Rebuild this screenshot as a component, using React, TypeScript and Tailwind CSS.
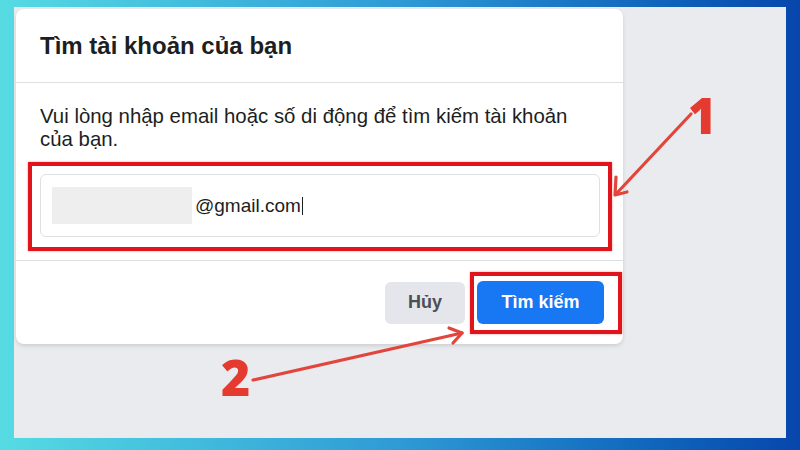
import React from "react";

export default function App() {
  return (
    <div
      className="relative w-[800px] h-[450px] overflow-hidden bg-linear-to-r from-[#56dbe3] via-[#2f9ad5] to-[#0846ac] pt-[7px] pl-[14px] pr-[14px] pb-[12px]"
      style={{ fontFamily: '"Liberation Sans", Arial, sans-serif' }}
    >
      <div className="w-full h-full bg-[#e9ebee] pl-[2px] pt-[2px] border-b border-[#d6f1f6]">
        <div className="w-[607px] h-[335px] bg-white rounded-lg shadow-[0_2px_4px_rgba(0,0,0,0.12)] flex flex-col">
          <div className="h-[74px] shrink-0 flex items-center px-6 border-b border-[#dddfe2]">
            <h2 className="text-[24px] leading-[28px] font-bold text-[#1c1e21]">
              Tìm tài khoản của bạn
            </h2>
          </div>
          <div className="px-6 pt-[22px] pb-[23px] border-b border-[#dddfe2]">
            <p className="text-[20.4px] leading-[23px] text-[#1c1e21]">
              Vui lòng nhập email hoặc số di động để tìm kiếm tài khoản của bạn.
            </p>
            <div className="mt-[23px] h-[63px] w-[560px] rounded-md border border-[#dddfe2] bg-white flex items-center pl-[11px]">
              <div className="w-[140px] h-[37px] bg-[#eeeeee]" />
              <span className="ml-[3px] text-[19px] leading-[22px] text-[#1c1e21]">
                @gmail.com
              </span>
              <span className="ml-[1px] w-px h-[18px] bg-[#1c1e21]" />
            </div>
          </div>
          <div className="flex-1 flex items-center justify-end gap-3 pr-[19px]">
            <button className="w-[80px] h-[42px] rounded-md bg-[#e4e6eb] text-[#4b4f56] text-[18px] font-bold">
              Hủy
            </button>
            <button className="w-[127px] h-[43px] rounded-md bg-[#1877f2] text-white text-[18px] font-bold">
              Tìm kiếm
            </button>
          </div>
        </div>
      </div>

      {/* annotations */}
      <div className="absolute left-[28px] top-[162px] w-[584px] h-[89px] border-[4px] border-[#e0141b] shadow-[0_0_2px_rgba(255,40,40,0.5)]" />
      <div className="absolute left-[470px] top-[272px] w-[152px] h-[62px] border-[4px] border-[#e0141b] shadow-[0_0_2px_rgba(255,40,40,0.5)]" />
      <svg className="absolute left-0 top-0" width="800" height="450" viewBox="0 0 800 450">
        <g stroke="#e2453c" strokeWidth="3.2" strokeLinecap="round" strokeLinejoin="round" fill="none">
          <line x1="691" y1="114" x2="616" y2="194" />
          <polyline points="616,177 615,195 627,192" />
          <line x1="253" y1="380" x2="462" y2="333" />
          <polyline points="449,328 462,333 453,343" />
        </g>
      </svg>
      <span
        className="absolute left-[688px] top-[91px] text-[49px] leading-none font-black text-[#e53a2f]"
        style={{ fontFamily: '"Open Sans", "Liberation Sans", sans-serif' }}
      >
        1
      </span>
      <span
        className="absolute left-[221px] top-[352px] text-[50px] leading-none font-black text-[#e53a2f]"
        style={{ fontFamily: '"Open Sans", "Liberation Sans", sans-serif' }}
      >
        2
      </span>
    </div>
  );
}
